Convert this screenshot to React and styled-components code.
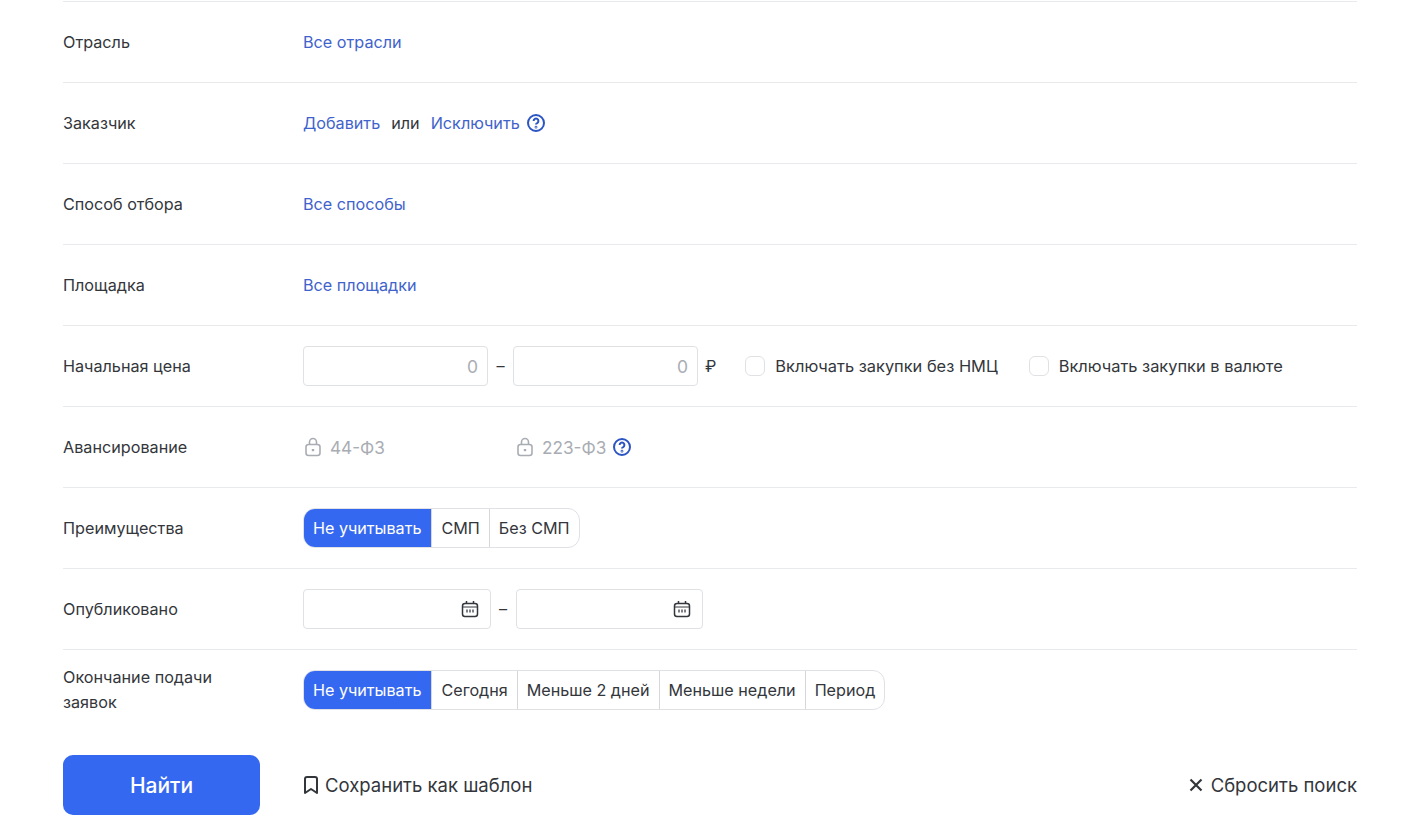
import React from 'react';
import styled, { createGlobalStyle } from 'styled-components';

const GlobalStyle = createGlobalStyle`
  html, body { margin: 0; padding: 0; background: #fff; }
  body { font-family: Inter, 'Noto Sans', sans-serif; color: #33363b; overflow: hidden; }
`;

const Page = styled.div`
  width: 1418px;
  height: 820px;
  box-sizing: border-box;
  padding: 1px 61px 0 63px;
  overflow: hidden;
`;

const Row = styled.div`
  display: flex;
  align-items: center;
  height: 81px;
  box-sizing: border-box;
  border-top: 1px solid #e8eaed;
  font-size: 16.2px;
`;

const Label = styled.div`
  width: 240px;
  flex-shrink: 0;
  line-height: 25px;
`;

const Controls = styled.div`
  display: flex;
  align-items: center;
`;

const TextLink = styled.a`
  color: #3f63cc;
`;

const Plain = styled.span`
  margin: 0 11px;
`;

const NumberBox = styled.div`
  width: 185px;
  height: 40px;
  box-sizing: border-box;
  border: 1px solid #dfe1e5;
  border-radius: 4px;
  display: flex;
  align-items: center;
  justify-content: flex-end;
  padding-right: 9px;
  font-size: 17.5px;
  color: #a9adb3;
`;

const Dash = styled.span`
  width: 25px;
  text-align: center;
`;

const Ruble = styled.span`
  margin-left: 7px;
`;

const Check = styled.span`
  width: 20px;
  height: 20px;
  box-sizing: border-box;
  border: 1px solid #dfe1e5;
  border-radius: 6px;
  margin-left: ${p => p.$gap}px;
  margin-right: 10px;
`;

const CheckText = styled.span`
  font-size: 16.4px;
`;

const Locked = styled.span`
  display: flex;
  align-items: center;
  gap: 7px;
  font-size: 17.2px;
  color: #a9adb3;
  width: ${p => (p.$width ? `${p.$width}px` : 'auto')};
`;

const Help = styled.svg`
  width: 20px;
  height: 20px;
  margin-left: 6px;
  color: #2c55c4;
`;

const Segments = styled.div`
  display: flex;
  height: 40px;
  box-sizing: border-box;
  border: 1px solid #dfe1e5;
  border-radius: 12px;
  overflow: hidden;
  font-size: 16.15px;
`;

const Segment = styled.div`
  display: flex;
  align-items: center;
  padding: 0 9px;
  border-left: 1px solid #d5d7da;
  &:first-child { border-left: 0; }
  ${p => p.$active && 'background: #3568f0; color: #fff; margin: -1px 0 -1px -1px; padding: 0 10px;'}
`;

const DateBox = styled.div`
  width: 187.5px;
  height: 40px;
  box-sizing: border-box;
  border: 1px solid #dfe1e5;
  border-radius: 4px;
  display: flex;
  align-items: center;
  justify-content: flex-end;
  padding-right: 11px;
`;

const Footer = styled.div`
  display: flex;
  align-items: center;
  margin-top: 25px;
  font-size: 18.5px;
`;

const FindButton = styled.button`
  width: 197px;
  height: 60px;
  border: 0;
  border-radius: 10px;
  background: #3568f0;
  color: #fff;
  font: 500 21px Inter, sans-serif;
  margin-right: 42px;
`;

const ActionText = styled.span`
  display: flex;
  align-items: center;
  gap: ${p => p.$gap}px;
  ${p => p.$end && 'margin-left: auto;'}
`;

const HelpIcon = () => (
  <Help viewBox="0 0 20 20" fill="none" stroke="currentColor" strokeWidth="2">
    <circle cx="10" cy="10" r="8" />
    <path d="M7.6 8a2.4 2.4 0 1 1 3.6 2.1c-.8.4-1.2.9-1.2 1.5" />
    <circle cx="10" cy="14.2" r=".4" />
  </Help>
);

const LockIcon = () => (
  <svg width="20" height="20" viewBox="0 0 20 20" fill="none" stroke="#a9adb3" strokeWidth="1.6">
    <rect x="3" y="7.5" width="14" height="11" rx="2.5" />
    <path d="M6.5 7.5V5a3.5 3.5 0 0 1 7 0v2.5" />
    <path d="M10 12v2.2" strokeWidth="2.4" />
  </svg>
);

const CalendarIcon = () => (
  <svg width="18" height="18" viewBox="0 0 18 18" fill="none" stroke="#33363b" strokeWidth="1.5">
    <rect x="1.5" y="3.5" width="15" height="13" rx="2.5" />
    <path d="M5.5 1v3M12.5 1v3" />
    <path d="M1.5 7h15" strokeWidth="1" />
    <path d="M5 11h8" stroke="#7b7e83" strokeWidth="3" strokeDasharray="2 1" />
  </svg>
);

const BookmarkIcon = () => (
  <svg width="18" height="20" viewBox="0 0 18 20" fill="none" stroke="#33363b" strokeWidth="2" strokeLinejoin="round">
    <path d="M3 4a2 2 0 0 1 2-2h8a2 2 0 0 1 2 2v14l-6-4-6 4z" />
  </svg>
);

const CloseIcon = () => (
  <svg width="14" height="14" viewBox="0 0 14 14" fill="none" stroke="#33363b" strokeWidth="2.2">
    <path d="M1.5 1.5l11 11M12.5 1.5l-11 11" />
  </svg>
);

export default function App() {
  return (
    <Page>
      <GlobalStyle />
      <Row><Label>Отрасль</Label><TextLink>Все отрасли</TextLink></Row>
      <Row>
        <Label>Заказчик</Label>
        <Controls>
          <TextLink>Добавить</TextLink><Plain>или</Plain><TextLink>Исключить</TextLink><HelpIcon />
        </Controls>
      </Row>
      <Row><Label>Способ отбора</Label><TextLink>Все способы</TextLink></Row>
      <Row><Label>Площадка</Label><TextLink>Все площадки</TextLink></Row>
      <Row>
        <Label>Начальная цена</Label>
        <Controls>
          <NumberBox>0</NumberBox><Dash>–</Dash><NumberBox>0</NumberBox>
          <Ruble>₽</Ruble>
          <Check $gap={29} /><CheckText>Включать закупки без НМЦ</CheckText>
          <Check $gap={31} /><CheckText>Включать закупки в валюте</CheckText>
        </Controls>
      </Row>
      <Row>
        <Label>Авансирование</Label>
        <Controls>
          <Locked $width={212}><LockIcon />44-ФЗ</Locked>
          <Locked><LockIcon />223-ФЗ</Locked><HelpIcon />
        </Controls>
      </Row>
      <Row>
        <Label>Преимущества</Label>
        <Segments>
          <Segment $active>Не учитывать</Segment><Segment>СМП</Segment><Segment>Без СМП</Segment>
        </Segments>
      </Row>
      <Row>
        <Label>Опубликовано</Label>
        <Controls>
          <DateBox><CalendarIcon /></DateBox><Dash>–</Dash><DateBox><CalendarIcon /></DateBox>
        </Controls>
      </Row>
      <Row>
        <Label>Окончание подачи<br />заявок</Label>
        <Segments>
          <Segment $active>Не учитывать</Segment><Segment>Сегодня</Segment><Segment>Меньше 2 дней</Segment><Segment>Меньше недели</Segment><Segment>Период</Segment>
        </Segments>
      </Row>
      <Footer>
        <FindButton>Найти</FindButton>
        <ActionText $gap={5}><BookmarkIcon />Сохранить как шаблон</ActionText>
        <ActionText $end $gap={8}><CloseIcon />Сбросить поиск</ActionText>
      </Footer>
    </Page>
  );
}
